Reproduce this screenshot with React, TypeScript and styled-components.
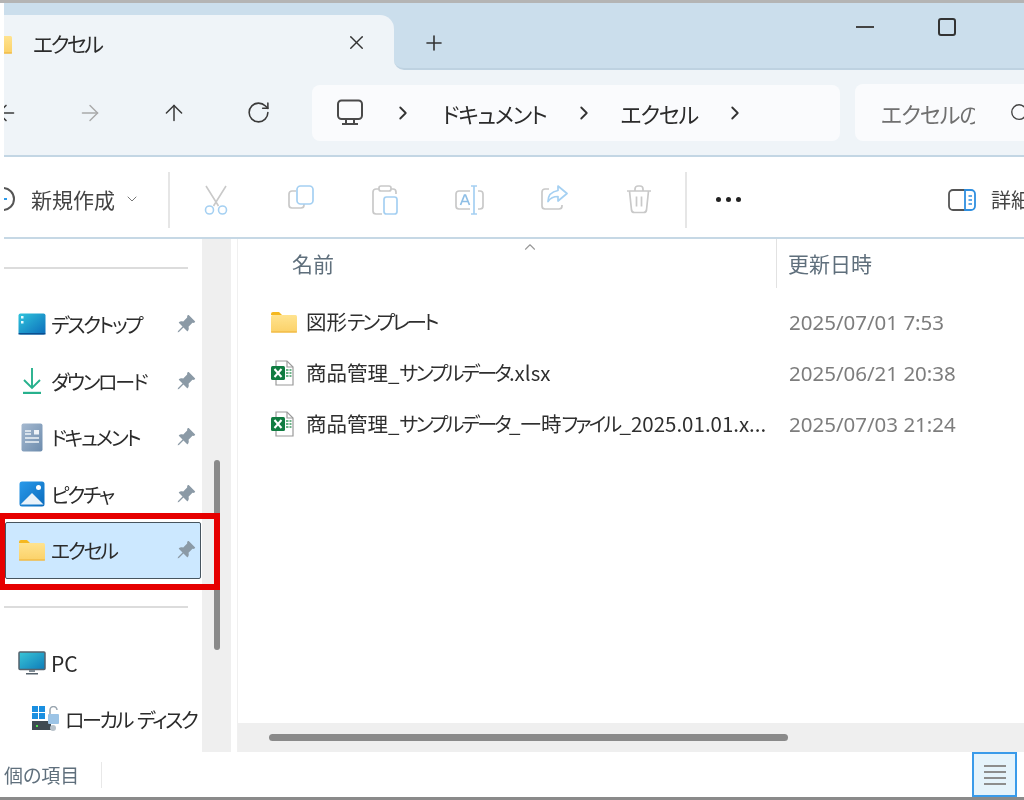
import React from "react"
import styled, { createGlobalStyle } from "styled-components"
import { ArrowLeft, ArrowRight, ArrowUp, RotateCw, ChevronRight, ChevronDown, ChevronUp, X, Plus, Search } from "lucide-react"
import { BsPinAngleFill } from "react-icons/bs"

const GlobalStyle = createGlobalStyle`
  html, body {
    margin: 0;
    padding: 0;
    background: #fff;
  }
  body {
    font-family: "Noto Sans CJK JP", "Noto Sans", sans-serif;
    font-feature-settings: "palt";
    color: #2b2b2b;
  }
`

const Page = styled.div`
  position: relative;
  width: 1024px;
  height: 800px;
  overflow: hidden;
  display: flex;
  flex-direction: column;
  background: #fff;
  filter: blur(0.45px);
`

const TopEdge = styled.div`
  height: 3px;
  flex: none;
  background: #b4b4b4;
`

const BottomEdge = styled.div`
  height: 3px;
  flex: none;
  background: #8a8a8a;
`

const Window = styled.div`
  flex: 1;
  min-height: 0;
  margin-left: 4px;
  overflow: hidden;
  display: flex;
  flex-direction: column;
`

// katakana in the reference font is much narrower than the kanji around it
const Kana = styled.span`
  font-size: 20px;
  letter-spacing: -2.3px;
`

const TitleBar = styled.div`
  height: 67px;
  flex: none;
  display: flex;
  background: #cbdeec;
`

const Tab = styled.div`
  position: relative;
  width: 390px;
  margin-top: 12px;
  display: flex;
  align-items: center;
  background: #eff4f8;
  border-top-right-radius: 14px;
  font-size: 21px;
  letter-spacing: -2.6px;
  color: #2b2b2b;

  &::after {
    content: "";
    position: absolute;
    right: -12px;
    bottom: 0;
    width: 12px;
    height: 12px;
    background: #eff4f8;
  }
`

const TabIcon = styled.span`
  display: flex;
  width: 29px;
  margin-left: -19px;
  margin-right: 19px;
`

const TabTitle = styled.span`
  flex: 1;
`

const TabClose = styled.span`
  display: flex;
  margin-right: 26px;
  color: #333;
`

const TabStrip = styled.div`
  position: relative;
  z-index: 1;
  flex: 1;
  display: flex;
  background: #cbdeec;
  border-bottom: 2px solid #bed2e1;
  border-bottom-left-radius: 10px;
`

const NewTab = styled.span`
  display: flex;
  align-items: center;
  margin: 12px 0 0 28px;
  height: 55px;
  color: #333;
`

const WindowControls = styled.div`
  margin-left: auto;
  display: flex;
  align-items: flex-start;
  gap: 64px;
  margin-right: -16px;
  padding-top: 15px;
`

const MinimizeGlyph = styled.span`
  width: 18px;
  height: 18px;
  display: flex;
  align-items: center;

  &::before {
    content: "";
    width: 18px;
    height: 2px;
    background: #444;
  }
`

const MaximizeGlyph = styled.span`
  width: 18px;
  height: 18px;
  box-sizing: border-box;
  border: 2px solid #333;
  border-radius: 3px;
`

const NavBar = styled.div`
  height: 85px;
  flex: none;
  display: flex;
  align-items: center;
  background: #eff4f8;
  border-bottom: 2px solid #c3d6e4;
`

const NavButton = styled.span<{ $muted?: boolean }>`
  width: 84px;
  flex: none;
  display: flex;
  justify-content: center;
  color: ${(p) => (p.$muted ? "#a9a9a9" : "#3a3a3a")};

  &:first-child {
    margin-left: -40px;
  }
`

const AddressBox = styled.div`
  width: 528px;
  height: 56px;
  flex: none;
  margin-left: 12px;
  box-sizing: border-box;
  padding-left: 24px;
  display: flex;
  align-items: center;
  background: #fafbfd;
  border-radius: 8px;
  font-size: 22px;
  letter-spacing: -1.300px;
  color: #2b2b2b;
`

const Crumb = styled.span`
  flex: none;
`

const CrumbChevron = styled.span`
  display: flex;
  flex: none;
  justify-content: center;
  width: 74px;
  color: #333;

  &:first-of-type {
    margin-left: 13px;
    width: 52px;
    margin-right: 13px;
  }
`

const SearchBox = styled.div`
  flex: 1;
  height: 57px;
  margin-left: 15px;
  padding-left: 26px;
  display: flex;
  align-items: center;
  overflow: hidden;
  background: #fafbfd;
  border-radius: 8px 0 0 8px;
  font-size: 22px;
  letter-spacing: -1px;
  color: #707070;
`

const SearchText = styled.span`
  width: 94px;
  flex: none;
  overflow: hidden;
  white-space: nowrap;
`

const SearchIcon = styled.span`
  display: flex;
  flex: none;
  margin-left: 34px;
  color: #444;
`

const CommandBar = styled.div`
  height: 82px;
  flex: none;
  box-sizing: border-box;
  padding-top: 5px;
  display: flex;
  align-items: center;
  background: #fff;
  border-bottom: 2px solid #c6d8e5;
`

const NewButton = styled.div`
  width: 177px;
  flex: none;
  margin-left: -13px;
  padding-bottom: 2px;
  display: flex;
  align-items: center;
  font-size: 21px;
  color: #444;
`

const NewIcon = styled.span`
  width: 24px;
  height: 24px;
  flex: none;
  box-sizing: border-box;
  border: 2px solid #555;
  border-radius: 50%;
  margin-right: 16px;
  display: flex;
  align-items: center;
  justify-content: center;

  &::before {
    content: "";
    width: 8px;
    height: 2px;
    background: #2f9bea;
  }
`

const NewChevron = styled.span`
  display: flex;
  margin-left: 9px;
  color: #777;
`

const CommandDivider = styled.span`
  width: 2px;
  height: 56px;
  flex: none;
  background: #e6e6e6;
`

const CommandIcons = styled.div`
  display: flex;
  padding: 0 4px;
`

const CommandIcon = styled.span`
  width: 84.5px;
  flex: none;
  display: flex;
  justify-content: center;
`

const MoreDots = styled.span`
  margin-left: 29px;
  display: flex;
  gap: 5px;

  i {
    width: 5px;
    height: 5px;
    border-radius: 50%;
    background: #222;
  }
`

const DetailsButton = styled.div`
  margin-left: auto;
  display: flex;
  align-items: center;
  gap: 15px;
  width: 76px;
  flex: none;
  overflow: hidden;
  white-space: nowrap;
  font-size: 20px;
  color: #444;
`

const Body = styled.div`
  flex: 1;
  min-height: 0;
  display: flex;
`

const Sidebar = styled.nav`
  width: 198px;
  flex: none;
  overflow: hidden;
  padding-top: 28px;
  box-sizing: border-box;
`

const SideDivider = styled.div`
  width: 184px;
  height: 2px;
  margin: 0 0 27px;
  background: #dcdcdc;

  * + & {
    margin-top: 27px;
  }
`

const SideItem = styled.div<{ $selected?: boolean; $indent?: boolean }>`
  height: 56.5px;
  width: 196px;
  box-sizing: border-box;
  display: flex;
  align-items: center;
  padding-left: ${(p) => (p.$indent ? "26px" : "12px")};
  margin-left: 1px;
  font-size: 21px;
  color: #2b2b2b;
  white-space: nowrap;
  border: 1px solid ${(p) => (p.$selected ? "#47555f" : "transparent")};
  border-radius: 2px;
  background: ${(p) => (p.$selected ? "#cce8ff" : "transparent")};
`

const SideIcon = styled.span`
  width: 28px;
  flex: none;
  display: flex;
  justify-content: center;
  margin-right: 5px;
`

const SideLabel = styled.span`
  flex: 1;
`

const PinIcon = styled.span`
  display: flex;
  flex: none;
  margin-right: 4px;
  color: #8b9aa6;
`

const SideScroll = styled.div`
  width: 29px;
  flex: none;
  box-sizing: border-box;
  padding: 221px 0 0 12px;
  background: #efefef;
`

const ScrollThumb = styled.div`
  width: 6px;
  height: 190px;
  border-radius: 3px;
  background: #8a8a8a;
`

const Main = styled.main`
  flex: 1;
  min-width: 0;
  margin-left: 6px;
  display: flex;
  flex-direction: column;
  border-left: 1px solid #f0f0f0;
`

const HeaderRow = styled.div`
  position: relative;
  height: 49px;
  flex: none;
  display: flex;
  align-items: center;
  font-size: 21px;
  color: #5f6f7c;
`

const SortCaret = styled.span`
  position: absolute;
  left: 283px;
  top: -1px;
  display: flex;
  color: #999;
`

const NameHead = styled.span`
  width: 484px;
  flex: none;
  padding: 0 0 2px 54px;
  box-sizing: border-box;
  margin-right: 54px;
`

const DateHead = styled.span`
  align-self: stretch;
  display: flex;
  align-items: center;
  padding: 0 0 2px 11px;
  border-left: 1px solid #e2e2e2;
`

const FileList = styled.div`
  flex: 1;
  padding-top: 8px;
`

const FileRow = styled.div`
  height: 51px;
  display: flex;
  align-items: center;
  padding-left: 32px;
  font-size: 20.5px;
`

const FileIcon = styled.span`
  width: 28px;
  flex: none;
  display: flex;
  margin-right: 8px;
`

const FileName = styled.span`
  width: 483px;
  flex: none;
  padding-bottom: 2px;
  white-space: nowrap;
  color: #2f2f2f;

  ${Kana} {
    letter-spacing: -2.8px;
  }
`

const FileDate = styled.span`
  color: #7d7d7d;
  font-family: "Noto Sans", sans-serif;
  font-size: 20.5px;
  white-space: nowrap;
`

const HScroll = styled.div`
  height: 29px;
  flex: none;
  display: flex;
  align-items: center;
  padding-left: 31px;
  background: #efefef;
`

const HThumb = styled.div`
  width: 519px;
  height: 7px;
  border-radius: 4px;
  background: #8a8a8a;
`

const StatusBar = styled.div`
  height: 45px;
  flex: none;
  display: flex;
  align-items: center;
  background: #fff;
  font-size: 19px;
  color: #5f6f7c;
`

const StatusText = styled.span`
  width: 97px;
  flex: none;
`

const StatusDivider = styled.span`
  width: 1px;
  height: 26px;
  background: #e8e8e8;
`

const ViewButton = styled.span`
  margin-left: auto;
  margin-right: 7px;
  width: 45px;
  height: 45px;
  box-sizing: border-box;
  display: flex;
  flex-direction: column;
  align-items: center;
  justify-content: center;
  gap: 4px;
  background: #e5f3fb;
  border: 2px solid #3a9bea;

  i {
    width: 22px;
    height: 2px;
    background: #8d8d8d;
  }
`

const Highlight = styled.div`
  position: absolute;
  left: 0;
  top: 513px;
  width: 220px;
  height: 77px;
  box-sizing: border-box;
  border: 6px solid #e60000;
  border-left-width: 5px;
`

const Jp = ({ text }: { text: string }) => (
  <>
    {text.split(/([\u30A0-\u30FF]+)/).map((part, i) => (i % 2 ? <Kana key={i}>{part}</Kana> : part))}
  </>
)

const FolderIcon = ({ w = 28 }: { w?: number }) => (
  <svg width={w} height={(w * 22) / 28} viewBox="0 0 28 22">
    <defs>
      <linearGradient id="fold" x1="0" y1="0" x2="0" y2="1">
        <stop offset="0" stopColor="#ffe38f" />
        <stop offset="1" stopColor="#fbd168" />
      </linearGradient>
    </defs>
    <path d="M1 3a2 2 0 0 1 2-2h6l3 3h-11z" fill="#f5b81f" />
    <rect x="1" y="4" width="26" height="17.5" rx="1.5" fill="url(#fold)" />
    <rect x="1" y="20.5" width="26" height="1" fill="#eeb032" />
  </svg>
)

const ExcelIcon = () => (
  <svg width="24" height="26" viewBox="0 0 24 26">
    <path d="M6 1h11l6 6v18H6z" fill="#fff" stroke="#9a9a9a" strokeWidth="1.2" />
    <path d="M17 1v6h6" fill="none" stroke="#9a9a9a" strokeWidth="1.2" />
    <g stroke="#3d9a62" strokeWidth="1.6">
      <path d="M16 10h2.5M19.5 10h2M16 13h2.5M19.5 13h2M16 16h2.5M19.5 16h2" />
    </g>
    <rect x="1" y="6" width="14" height="14" rx="1.5" fill="#107c41" />
    <path d="M4.5 9l7 8M11.5 9l-7 8" stroke="#fff" strokeWidth="2" />
  </svg>
)

const MonitorOutline = () => (
  <svg width="28" height="27" viewBox="0 0 28 27" fill="none" stroke="#4a4a4a" strokeWidth="2">
    <rect x="2" y="1.5" width="24" height="18.5" rx="3.5" />
    <path d="M10 20v4M18 20v4M6 25h16" />
  </svg>
)

const CutIcon = () => (
  <svg width="26" height="30" viewBox="0 0 26 30" fill="none" strokeWidth="1.6">
    <path d="M3 1l12.5 20M23 1L10.500 21" stroke="#c9c9c9" />
    <circle cx="6.500" cy="25" r="4" stroke="#a5d0f2" />
    <circle cx="19.500" cy="25" r="4" stroke="#a5d0f2" />
  </svg>
)

const CopyIcon = () => (
  <svg width="26" height="26" viewBox="0 0 26 26" fill="none" strokeWidth="1.7">
    <path d="M8 6H4a3 3 0 0 0-3 3v11a3 3 0 0 0 3 3h9a3 3 0 0 0 3-3v-1" stroke="#c9c9c9" />
    <rect x="9" y="1" width="16" height="18" rx="3.500" stroke="#a5d0f2" />
  </svg>
)

const PasteIcon = () => (
  <svg width="26" height="30" viewBox="0 0 26 30" fill="none" strokeWidth="1.7">
    <path d="M7 4H4a3 3 0 0 0-3 3v19a3 3 0 0 0 3 3h6M19 4h2a3 3 0 0 1 3 3v2" stroke="#c9c9c9" />
    <rect x="7" y="1" width="12" height="5" rx="2" stroke="#c9c9c9" />
    <rect x="12" y="12" width="13" height="17" rx="2.500" stroke="#a5d0f2" />
  </svg>
)

const RenameIcon = () => (
  <svg width="30" height="30" viewBox="0 0 30 30" fill="none" strokeWidth="1.7">
    <path d="M15 6H4a3 3 0 0 0-3 3v12a3 3 0 0 0 3 3h11M23 6h2a3 3 0 0 1 3 3v12a3 3 0 0 1-3 3h-2" stroke="#c9c9c9" />
    <path d="M5.500 20l4-10h1l4 10M7 16.500h6" stroke="#8fbfe6" />
    <path d="M16 1h6M19 1v28M16 29h6" stroke="#a5d0f2" />
  </svg>
)

const ShareIcon = () => (
  <svg width="28" height="26" viewBox="0 0 28 26" fill="none" strokeWidth="1.7">
    <path d="M9 4H5a3 3 0 0 0-3 3v14a3 3 0 0 0 3 3h14a3 3 0 0 0 3-3v-1" stroke="#c9c9c9" />
    <path d="M18 1l9 7.500-9 7.500v-4.500c-5 0-8 2-10 5 0-6 4-10 10-11z" stroke="#a5d0f2" strokeLinejoin="round" />
  </svg>
)

const TrashIcon = () => (
  <svg width="26" height="29" viewBox="0 0 26 29" fill="none" stroke="#c9c9c9" strokeWidth="1.7">
    <path d="M1 6h24M9 6V4a3 3 0 0 1 3-3h2a3 3 0 0 1 3 3v2" />
    <path d="M3.500 6l2 19a3 3 0 0 0 3 2.500h9a3 3 0 0 0 3-2.500l2-19M10.500 11.500v10M15.500 11.500v10" />
  </svg>
)

const DetailsIcon = () => (
  <svg width="28" height="22" viewBox="0 0 28 22" fill="none" strokeWidth="1.8" style={{ flex: "none" }}>
    <path d="M17 1H5a4 4 0 0 0-4 4v12a4 4 0 0 0 4 4h12" stroke="#555" />
    <path d="M17 1h6a4 4 0 0 1 4 4v12a4 4 0 0 1-4 4h-6z" stroke="#2f8fe0" />
    <path d="M20.500 7h3.500M20.500 11h3.500M20.500 15h3.500" stroke="#2f8fe0" strokeWidth="1.400" />
  </svg>
)

const DesktopIcon = () => (
  <svg width="28" height="22" viewBox="0 0 28 22">
    <defs>
      <linearGradient id="desk" x1="0" y1="0" x2="1" y2="1">
        <stop offset="0" stopColor="#2fc4dc" />
        <stop offset="1" stopColor="#0c6dbb" />
      </linearGradient>
    </defs>
    <rect x="0.500" y="0.500" width="27" height="21" rx="2" fill="url(#desk)" />
    <rect x="0.500" y="20" width="27" height="1.500" fill="#0b4f8f" />
    <rect x="3" y="3" width="2.500" height="2.500" fill="#e9fbff" />
    <rect x="3" y="8" width="2.500" height="2.500" fill="#e9fbff" />
  </svg>
)

const DownloadIcon = () => (
  <svg width="20" height="27" viewBox="0 0 20 27" fill="none" stroke="#27b18d" strokeWidth="1.900">
    <path d="M10 1v19M2 13l8 8 8-8" />
    <path d="M1 26h18" strokeWidth="2.400" />
  </svg>
)

const DocumentIcon = () => (
  <svg width="22" height="29" viewBox="0 0 22 29">
    <defs>
      <linearGradient id="doc" x1="0" y1="0" x2="1" y2="1">
        <stop offset="0" stopColor="#a5b9d0" />
        <stop offset="1" stopColor="#6d8cad" />
      </linearGradient>
    </defs>
    <rect x="0.500" y="0.500" width="21" height="28" rx="2" fill="url(#doc)" />
    <path d="M4 8h6M4 11h6M4 15h14M4 19h14" stroke="#eef3f8" strokeWidth="1.300" />
    <rect x="13" y="7" width="5" height="4.500" fill="#eef3f8" />
  </svg>
)

const PictureIcon = () => (
  <svg width="26" height="26" viewBox="0 0 26 26">
    <defs>
      <linearGradient id="pict" x1="0" y1="0" x2="1" y2="1">
        <stop offset="0" stopColor="#2a9aea" />
        <stop offset="1" stopColor="#0a6bbd" />
      </linearGradient>
    </defs>
    <rect x="0.500" y="0.500" width="25" height="25" rx="2.500" fill="url(#pict)" />
    <circle cx="19.500" cy="6.500" r="2.500" fill="#fff" />
    <path d="M1.500 23.500L13 12l11.500 11.500z" fill="#e8f2fa" />
  </svg>
)

const PcIcon = () => (
  <svg width="28" height="24" viewBox="0 0 28 24">
    <defs>
      <linearGradient id="pcs" x1="0" y1="0" x2="1" y2="1">
        <stop offset="0" stopColor="#3ac6d8" />
        <stop offset="1" stopColor="#0d7bb8" />
      </linearGradient>
    </defs>
    <rect x="1" y="1" width="26" height="17.500" rx="1" fill="url(#pcs)" stroke="#56626c" strokeWidth="1.500" />
    <path d="M11 19h6v2h-6z" fill="#7f8b94" />
    <path d="M8 22h12v1.500H8z" fill="#56626c" />
  </svg>
)

const DiskIcon = () => (
  <svg width="28" height="26" viewBox="0 0 28 26">
    <rect x="0" y="0" width="6" height="6" fill="#1a8fe0" />
    <rect x="7" y="0" width="6" height="6" fill="#1a8fe0" />
    <rect x="0" y="7" width="6" height="6" fill="#1a8fe0" />
    <rect x="7" y="7" width="6" height="6" fill="#1a8fe0" />
    <rect x="0" y="15" width="19" height="9" fill="#3f4a52" />
    <rect x="4" y="19" width="2" height="2" fill="#4fe04f" />
    <rect x="16" y="8" width="11" height="10" rx="1" fill="#9cc4e6" />
    <path d="M18 8V4a3.500 3.500 0 0 1 7 0" fill="none" stroke="#9aa6b0" strokeWidth="1.500" />
    <circle cx="21" cy="22" r="3" fill="#b8c2ca" />
  </svg>
)

const sideItems = [
  { icon: <DesktopIcon />, label: "デスクトップ" },
  { icon: <DownloadIcon />, label: "ダウンロード" },
  { icon: <DocumentIcon />, label: "ドキュメント" },
  { icon: <PictureIcon />, label: "ピクチャ" },
  { icon: <FolderIcon />, label: "エクセル", selected: true },
]

const files = [
  { icon: <FolderIcon />, name: "図形テンプレート", date: "2025/07/01 7:53" },
  { icon: <ExcelIcon />, name: "商品管理_サンプルデータ.xlsx", date: "2025/06/21 20:38" },
  { icon: <ExcelIcon />, name: "商品管理_サンプルデータ_一時ファイル_2025.01.01.x...", date: "2025/07/03 21:24" },
]

export default function App() {
  return (
    <Page>
      <GlobalStyle />
      <TopEdge />
      <Window>
        <TitleBar>
          <Tab>
            <TabIcon><FolderIcon /></TabIcon>
            <TabTitle>エクセル</TabTitle>
            <TabClose><X size={23} strokeWidth={1.5} /></TabClose>
          </Tab>
          <TabStrip>
            <NewTab><Plus size={24} strokeWidth={1.6} /></NewTab>
            <WindowControls>
              <MinimizeGlyph />
              <MaximizeGlyph />
              <X size={20} strokeWidth={1.6} />
            </WindowControls>
          </TabStrip>
        </TitleBar>

        <NavBar>
          <NavButton><ArrowLeft size={26} strokeWidth={1.4} /></NavButton>
          <NavButton $muted><ArrowRight size={26} strokeWidth={1.3} /></NavButton>
          <NavButton><ArrowUp size={26} strokeWidth={1.4} /></NavButton>
          <NavButton><RotateCw size={25} strokeWidth={1.5} /></NavButton>
          <AddressBox>
            <MonitorOutline />
            <CrumbChevron><ChevronRight size={22} strokeWidth={2} /></CrumbChevron>
            <Crumb>ドキュメント</Crumb>
            <CrumbChevron><ChevronRight size={22} strokeWidth={2} /></CrumbChevron>
            <Crumb>エクセル</Crumb>
            <CrumbChevron><ChevronRight size={22} strokeWidth={2} /></CrumbChevron>
          </AddressBox>
          <SearchBox>
            <SearchText>エクセルの検索</SearchText>
            <SearchIcon><Search size={22} strokeWidth={1.5} /></SearchIcon>
          </SearchBox>
        </NavBar>

        <CommandBar>
          <NewButton>
            <NewIcon />
            新規作成
            <NewChevron><ChevronDown size={16} strokeWidth={1.5} /></NewChevron>
          </NewButton>
          <CommandDivider />
          <CommandIcons>
            <CommandIcon><CutIcon /></CommandIcon>
            <CommandIcon><CopyIcon /></CommandIcon>
            <CommandIcon><PasteIcon /></CommandIcon>
            <CommandIcon><RenameIcon /></CommandIcon>
            <CommandIcon><ShareIcon /></CommandIcon>
            <CommandIcon><TrashIcon /></CommandIcon>
          </CommandIcons>
          <CommandDivider />
          <MoreDots><i /><i /><i /></MoreDots>
          <DetailsButton>
            <DetailsIcon />
            詳細
          </DetailsButton>
        </CommandBar>

        <Body>
          <Sidebar>
            <SideDivider />
            {sideItems.map((item) => (
              <SideItem key={item.label} $selected={item.selected}>
                <SideIcon>{item.icon}</SideIcon>
                <SideLabel><Jp text={item.label} /></SideLabel>
                <PinIcon><BsPinAngleFill size={20} /></PinIcon>
              </SideItem>
            ))}
            <SideDivider />
            <SideItem>
              <SideIcon><PcIcon /></SideIcon>
              <SideLabel>PC</SideLabel>
            </SideItem>
            <SideItem $indent>
              <SideIcon><DiskIcon /></SideIcon>
              <SideLabel><Jp text="ローカル ディスク" /></SideLabel>
            </SideItem>
          </Sidebar>
          <SideScroll><ScrollThumb /></SideScroll>
          <Main>
            <HeaderRow>
              <SortCaret><ChevronUp size={18} strokeWidth={1.5} /></SortCaret>
              <NameHead>名前</NameHead>
              <DateHead>更新日時</DateHead>
            </HeaderRow>
            <FileList>
              {files.map((file) => (
                <FileRow key={file.name}>
                  <FileIcon>{file.icon}</FileIcon>
                  <FileName><Jp text={file.name} /></FileName>
                  <FileDate>{file.date}</FileDate>
                </FileRow>
              ))}
            </FileList>
            <HScroll><HThumb /></HScroll>
          </Main>
        </Body>

        <StatusBar>
          <StatusText>個の項目</StatusText>
          <StatusDivider />
          <ViewButton><i /><i /><i /><i /></ViewButton>
        </StatusBar>
      </Window>
      <BottomEdge />
      <Highlight />
    </Page>
  )
}
